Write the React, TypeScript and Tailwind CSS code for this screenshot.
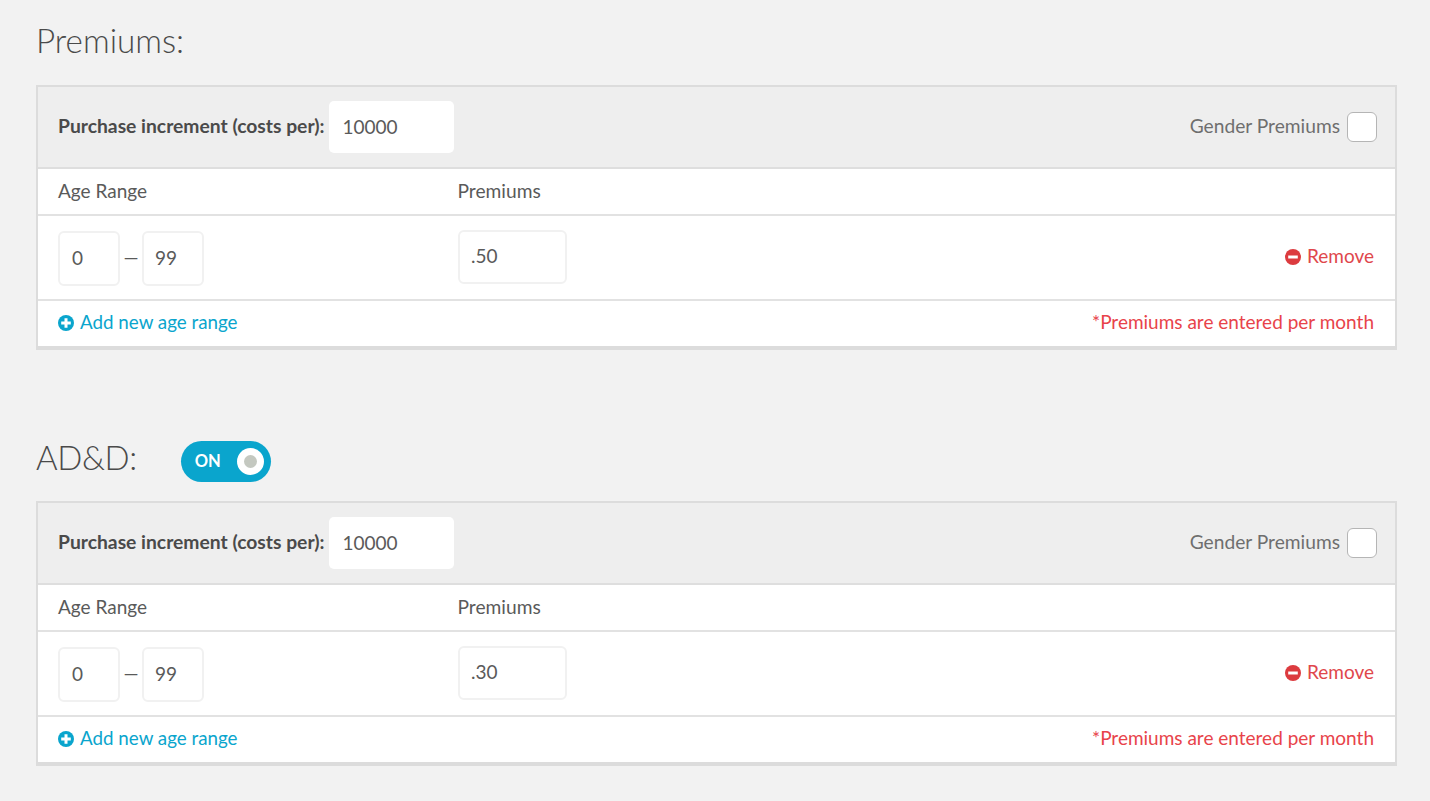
type SectionProps = {
    premium: string;
};

function Field({ value, className }: { value: string; className: string }) {
    return (
        <div className={`flex items-center rounded-[6px] border-2 border-[#f1f1f1] bg-white text-[19px] text-[#5a5a5a] ${className}`}>
            {value}
        </div>
    );
}

function PlusIcon() {
    return (
        <svg viewBox="0 0 16 16" className="h-4 w-4 shrink-0">
            <circle cx="8" cy="8" r="8" fill="#0aa5cd" />
            <path d="M8 3.2v9.6M3.2 8h9.6" stroke="#fff" strokeWidth="3" />
        </svg>
    );
}

function MinusIcon() {
    return (
        <svg viewBox="0 0 16 16" className="h-4 w-4 shrink-0">
            <circle cx="8" cy="8" r="8" fill="#dc3b3f" />
            <path d="M3.2 8h9.6" stroke="#fff" strokeWidth="3" />
        </svg>
    );
}

function PremiumsCard({ premium }: SectionProps) {
    return (
        <div className="border-x-2 border-t-2 border-b-[4px] border-[#dcdcdc] bg-white">
            <div className="flex h-[82px] items-center justify-between border-b-2 border-[#dedede] bg-[#eeeeee] pl-5 pr-[18px]">
                <div className="flex items-center">
                    <span className="mb-[2px] text-[19.3px] font-bold text-[#4a4a4a]">Purchase increment (costs per):</span>
                    <div className="ml-[5px] flex h-[52px] w-[125px] items-center rounded-[5px] bg-white pl-[13px] text-[19px] text-[#5a5a5a]">10000</div>
                </div>
                <div className="flex items-center">
                    <span className="mb-[2px] text-[19.2px] text-[#6e6e6e]">Gender Premiums</span>
                    <div className="ml-[7px] h-[30px] w-[30px] rounded-[6px] border-[1.5px] border-[#b5b5b5] bg-white" />
                </div>
            </div>
            <div className="flex h-[47px] items-center border-b-2 border-[#e2e2e2] pl-5 text-[19px] text-[#5a5a5a]">
                <span className="w-[399.5px]">Age Range</span>
                <span className="text-[19.2px]">Premiums</span>
            </div>
            <div className="flex h-[85px] items-center justify-between border-b-2 border-[#e2e2e2] pl-5 pr-[21px]">
                <div className="flex items-center">
                    <div className="mt-[2px] flex w-[400px] items-center">
                        <Field value="0" className="h-[55px] w-[62px] pl-3" />
                        <span className="mb-[2px] w-[22px] text-center text-[19px] text-[#5a5a5a]">—</span>
                        <Field value="99" className="h-[55px] w-[62px] pl-[11px]" />
                    </div>
                    <Field value={premium} className="mb-[2px] h-[54px] w-[109px] pl-[11px]" />
                </div>
                <div className="mb-[2px] flex items-center gap-[6px] text-[19px] text-[#e0474c]">
                    <MinusIcon />
                    Remove
                </div>
            </div>
            <div className="flex h-[45px] items-center justify-between pb-[2px] pl-5 pr-[21px] text-[19px]">
                <div className="flex items-center gap-[6px] text-[#0aa5cd]">
                    <PlusIcon />
                    <span className="text-[18.8px]">Add new age range</span>
                </div>
                <span className="text-[#e8434a]">*Premiums are entered per month</span>
            </div>
        </div>
    );
}

export default function App() {
    return (
        <div className="h-[801px] overflow-hidden bg-[#f2f2f2] pl-9 pr-[33px] font-['Lato',sans-serif]">
            <div className="flex h-[85px] items-start pt-[18px]">
                <h1 className="text-[33.2px] font-light leading-[44px] text-[#4a4a4a]">Premiums:</h1>
            </div>
            <PremiumsCard premium=".50" />
            <div className="flex h-[151px] items-end pb-[19px]">
                <h1 className="mb-[3px] text-[33px] font-light leading-[44px] tracking-[-0.4px] text-[#4a4a4a]">AD&amp;D:</h1>
                <div className="ml-[44px] flex h-[41px] w-[90px] items-center justify-between rounded-full bg-[#0aa5cd] pl-[14px] pr-[7px]">
                    <span className="mb-[1px] text-[16.5px] font-bold text-white">ON</span>
                    <div className="flex h-[27px] w-[27px] items-center justify-center rounded-full bg-white">
                        <div className="h-[13px] w-[13px] rounded-full bg-[#c4c8c0]" />
                    </div>
                </div>
            </div>
            <PremiumsCard premium=".30" />
        </div>
    );
}
